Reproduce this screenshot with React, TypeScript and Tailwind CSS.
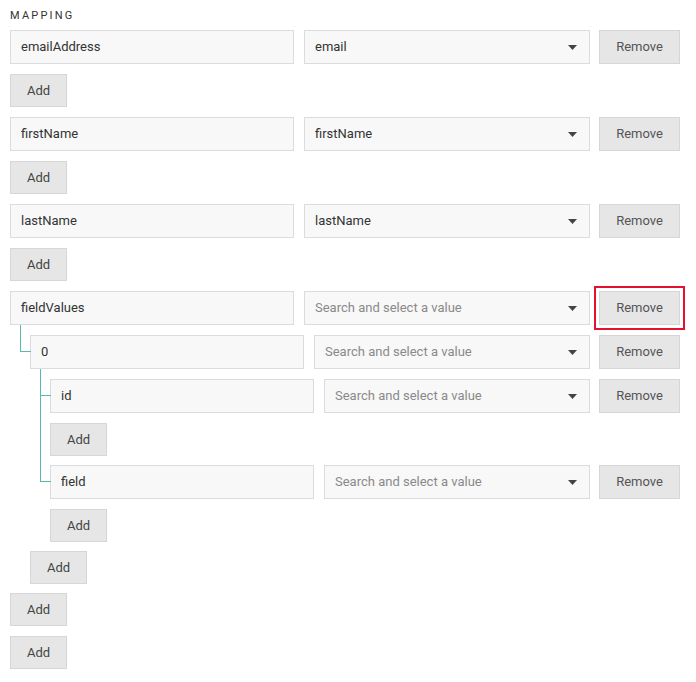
import React from "react";

type Node = { key: string; value?: string; children?: Node[] };

const data: Node[] = [
  { key: "emailAddress", value: "email" },
  { key: "firstName", value: "firstName" },
  { key: "lastName", value: "lastName" },
  {
    key: "fieldValues",
    children: [
      {
        key: "0",
        children: [{ key: "id" }, { key: "field" }],
      },
    ],
  },
];

function Caret() {
  return (
    <svg width="9" height="5" viewBox="0 0 9 5" className="shrink-0">
      <path d="M0 0 L9 0 L4.5 5 Z" fill="#444" />
    </svg>
  );
}

function AddButton() {
  return (
    <button className="w-[57px] h-[33px] bg-[#e6e6e6] border border-[#d6d6d6] text-[13px] text-[#444] flex items-center justify-center shrink-0">
      Add
    </button>
  );
}

function Row({ node, highlight }: { node: Node; highlight?: boolean }) {
  return (
    <div className="flex h-[34px]">
      <div className="flex-1 min-w-0 h-[34px] bg-[#f8f8f8] border border-[#dcdcdc] px-[10px] flex items-center text-[13px] text-[#333]">
        {node.key}
      </div>
      <div className="ml-[10px] flex-1 min-w-0 h-[34px] bg-[#f8f8f8] border border-[#dcdcdc] pl-[10px] pr-[12px] flex items-center justify-between text-[13px]">
        {node.value ? (
          <span className="text-[#333]">{node.value}</span>
        ) : (
          <span className="text-[#8a8a8a]">Search and select a value</span>
        )}
        <Caret />
      </div>
      <button
        className={
          "ml-[9px] w-[81px] h-[34px] shrink-0 bg-[#e6e6e6] border border-[#d6d6d6] text-[13px] text-[#555] flex items-center justify-center" +
          (highlight ? " outline-2 outline-solid outline-[#e4112f] outline-offset-[3px]" : "")
        }
      >
        Remove
      </button>
    </div>
  );
}

function Item({ node, nested, last }: { node: Node; nested?: boolean; last?: boolean }) {
  return (
    <div className="relative flex flex-col">
      {nested && (
        <div className="absolute left-[-10px] top-[-10px] h-[27px] w-[11px] border-l-[1.5px] border-b-[1.5px] border-[#5ab8af]" />
      )}
      {nested && !last && (
        <div className="absolute left-[-10px] top-[17px] bottom-[-10px] w-0 border-l-[1.5px] border-[#5ab8af]" />
      )}
      <Row node={node} highlight={node.key === "fieldValues"} />
      {node.children && node.children.length > 0 && (
        <div className="ml-[20px] mt-[10px] flex flex-col gap-[9px]">
          {node.children.map((c, i) => (
            <Item key={c.key} node={c} nested last={i === node.children!.length - 1} />
          ))}
        </div>
      )}
      <div className={node.children ? "mt-[9px]" : "mt-[10px]"}>
        <AddButton />
      </div>
    </div>
  );
}

export default function App() {
  return (
    <div
      className="w-[696px] h-[682px] bg-white pl-[10px] pt-[9px] pr-[16px]"
      style={{ fontFamily: "Roboto, 'Noto Sans', Arial, sans-serif" }}
    >
      <div className="text-[11px] leading-[14px] tracking-[2.2px] font-normal text-[#333] mb-[7px]">MAPPING</div>
      <div className="flex flex-col gap-[10px]">
        {data.map((n) => (
          <Item key={n.key} node={n} />
        ))}
        <AddButton />
      </div>
    </div>
  );
}
